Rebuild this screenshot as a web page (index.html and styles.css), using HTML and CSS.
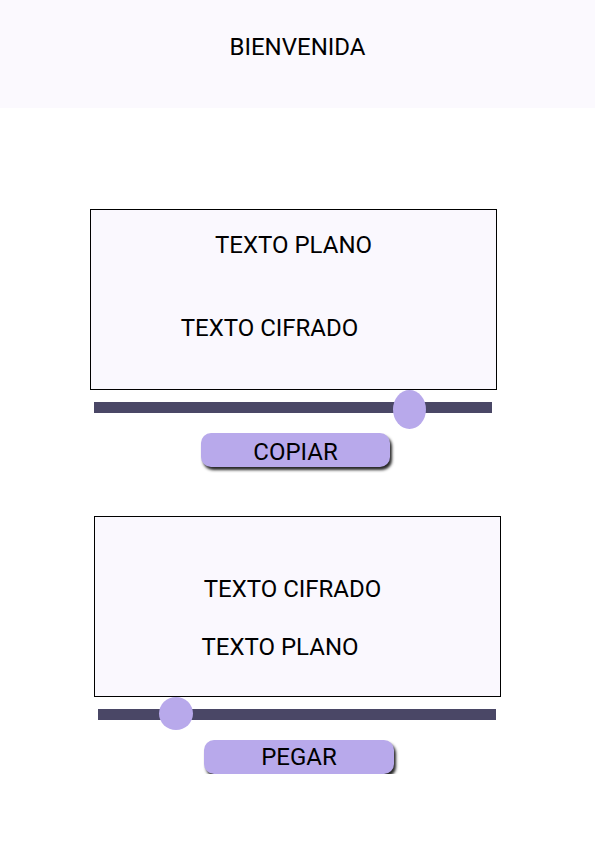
FILE: index.html
```html
<!DOCTYPE html>
<html lang="es">
<head>
<meta charset="utf-8">
<title>Bienvenida</title>
<link rel="stylesheet" href="styles.css">
</head>
<body>
<header class="header">BIENVENIDA</header>
<main class="main">
  <section class="block block-encrypt">
    <div class="panel panel-encrypt">
      <div class="label label-top">TEXTO PLANO</div>
      <div class="label label-cipher">TEXTO CIFRADO</div>
    </div>
    <div class="slider slider-encrypt">
      <div class="thumb thumb-oval" style="left: 299px;"></div>
    </div>
    <button class="btn btn-copy">COPIAR</button>
  </section>
  <section class="block block-decrypt">
    <div class="panel panel-decrypt">
      <div class="label label-cipher2">TEXTO CIFRADO</div>
      <div class="label label-plain2">TEXTO PLANO</div>
    </div>
    <div class="slider slider-decrypt">
      <div class="thumb thumb-round" style="left: 61px;"></div>
    </div>
    <button class="btn btn-paste">PEGAR</button>
  </section>
</main>
</body>
</html>
```

FILE: styles.css
```css
* { box-sizing: border-box; }
html, body { margin: 0; padding: 0; background: #ffffff; }
body {
  font-family: Roboto, "Liberation Sans", Arial, sans-serif;
  color: #000000;
  font-size: 24px;
  line-height: 28px;
}
.header {
  height: 108px;
  background: #fbf9fe;
  text-align: center;
  padding-top: 33px;
}
.main { display: flex; flex-direction: column; }
.block { display: flex; flex-direction: column; align-items: flex-start; }
.block-encrypt { margin-top: 101px; padding-left: 90px; }
.block-decrypt { margin-top: 49px; padding-left: 94px; }

.panel {
  width: 407px;
  height: 181px;
  border: 1px solid #000000;
  background: #faf8fe;
  display: flex;
  flex-direction: column;
}
.panel-encrypt { padding-top: 21px; }
.panel-decrypt { padding-top: 58px; }
.label { text-align: center; white-space: nowrap; }
.label-cipher { margin-top: 55px; padding-right: 48px; }
.label-cipher2 { padding-right: 10px; }
.label-plain2 { margin-top: 30px; padding-right: 35px; }

.slider {
  position: relative;
  width: 398px;
  height: 11px;
  margin-top: 12px;
  margin-left: 4px;
  background: #4a4766;
}
.thumb {
  position: absolute;
  background: #b8a9eb;
  border-radius: 50%;
}
.thumb-oval { width: 33px; height: 39px; top: -12px; }
.thumb-round { width: 34px; height: 33px; top: -12px; }

.btn {
  font-family: Roboto, "Liberation Sans", Arial, sans-serif;
  font-size: 24px;
  line-height: 28px;
  color: #000000;
  background: #b8a9eb;
  border: none;
  border-radius: 10px;
  height: 34px;
  margin-top: 20px;
  padding: 0;
  text-align: center;
  box-shadow: 2px 3px 3px rgba(0, 0, 0, 0.85);
  display: flex;
  justify-content: center;
  align-items: flex-start;
}
.btn-copy { width: 189px; margin-left: 111px; padding-top: 5px; }
.btn-paste { width: 190px; margin-left: 110px; padding-top: 3px; }
```
